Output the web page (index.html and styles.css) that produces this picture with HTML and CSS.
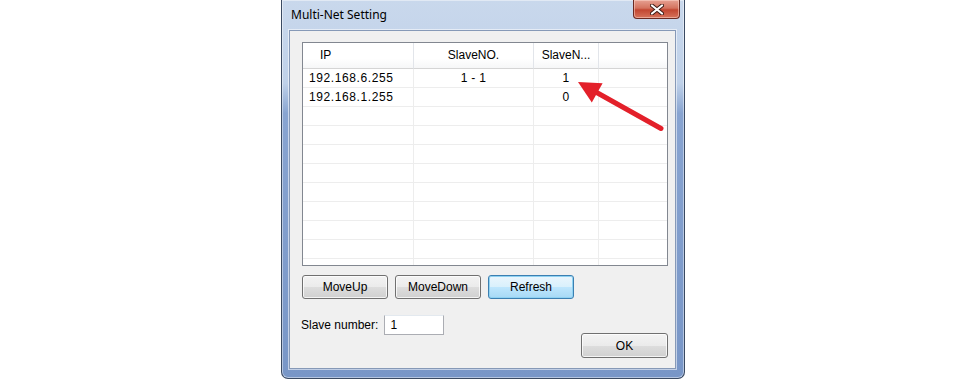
FILE: index.html
```html
<!DOCTYPE html>
<html lang="en">
  <head>
    <meta charset="UTF-8" />
    <title>Multi-Net Setting</title>
    <link rel="stylesheet" href="styles.css">
  </head>
  <body>
    <div class="window">
      <div class="titlebar">
        <span class="title">Multi-Net Setting</span>
        <button class="close" aria-label="Close">
          <svg width="14" height="11" viewBox="0 0 14 11">
            <path d="M2 1.5 L12 9.5 M12 1.5 L2 9.5" stroke="#3b1a14" stroke-width="4" stroke-linecap="round" />
            <path d="M2 1.5 L12 9.5 M12 1.5 L2 9.5" stroke="#fff" stroke-width="2.2" stroke-linecap="round" />
          </svg>
        </button>
      </div>

      <div class="client">
        <div class="listview">
          <div class="lv-row lv-header">
            <div class="cell ip">IP</div>
            <div class="cell center">SlaveNO.</div>
            <div class="cell center">SlaveN...</div>
            <div class="cell"></div>
          </div>
          <div class="lv-body">
            <div class="lv-row">
              <div class="cell ip">192.168.6.255</div>
              <div class="cell center">1 - 1</div>
              <div class="cell center">1</div>
              <div class="cell"></div>
            </div>
            <div class="lv-row">
              <div class="cell ip">192.168.1.255</div>
              <div class="cell center"></div>
              <div class="cell center">0</div>
              <div class="cell"></div>
            </div>
            <div class="lv-row"><div class="cell"></div><div class="cell"></div><div class="cell"></div><div class="cell"></div></div>
            <div class="lv-row"><div class="cell"></div><div class="cell"></div><div class="cell"></div><div class="cell"></div></div>
            <div class="lv-row"><div class="cell"></div><div class="cell"></div><div class="cell"></div><div class="cell"></div></div>
            <div class="lv-row"><div class="cell"></div><div class="cell"></div><div class="cell"></div><div class="cell"></div></div>
            <div class="lv-row"><div class="cell"></div><div class="cell"></div><div class="cell"></div><div class="cell"></div></div>
            <div class="lv-row"><div class="cell"></div><div class="cell"></div><div class="cell"></div><div class="cell"></div></div>
            <div class="lv-row"><div class="cell"></div><div class="cell"></div><div class="cell"></div><div class="cell"></div></div>
            <div class="lv-row"><div class="cell"></div><div class="cell"></div><div class="cell"></div><div class="cell"></div></div>
            <div class="lv-row"><div class="cell"></div><div class="cell"></div><div class="cell"></div><div class="cell"></div></div>
          </div>
        </div>

        <div class="buttons">
          <button class="btn">MoveUp</button>
          <button class="btn">MoveDown</button>
          <button class="btn default">Refresh</button>
        </div>

        <div class="bottom">
          <div class="slave">
            <label for="slave">Slave number:</label>
            <input id="slave" class="field" type="text" value="1">
          </div>
          <button class="btn ok">OK</button>
        </div>
      </div>
    </div>

    <svg class="arrow" width="100" height="62" viewBox="0 0 100 62">
      <line x1="24" y1="17" x2="91" y2="54.5" stroke="#e3202a" stroke-width="5" stroke-linecap="round" />
      <polygon points="8,8 32.6,9.2 21.8,28.4" fill="#e3202a" />
    </svg>
  </body>
</html>
```

FILE: styles.css
```css
* {
  box-sizing: border-box;
}
body {
  margin: 0;
  height: 379px;
  overflow: hidden;
  position: relative;
  background-color: #fff;
  font-family: "Liberation Sans", Arial, sans-serif;
  font-size: 12px;
  color: #000;
}
.window {
  margin-left: 281px;
  width: 404px;
  height: 379px;
  display: flex;
  flex-direction: column;
  padding: 0 8px 9px 7px;
  border: 1px solid #3a4a62;
  border-top: 0;
  border-radius: 0 0 7px 7px;
  background: linear-gradient(#c9d8ec 0, #bfd1e9 22%, #88a4d1 30%, #7896c7 100%);
  box-shadow: inset 0 0 0 1px rgba(255, 255, 255, 0.45);
}
.titlebar {
  height: 30px;
  flex-shrink: 0;
  display: flex;
  justify-content: space-between;
  align-items: flex-start;
}
.title {
  padding: 7px 0 0 2px;
  font-family: "Noto Sans", "Open Sans", sans-serif;
  font-size: 12px;
  line-height: 16px;
  color: #000;
}
.close {
  width: 47px;
  height: 19px;
  margin-right: -4px;
  padding: 0;
  display: flex;
  justify-content: center;
  align-items: center;
  border: 1px solid #6b2a22;
  border-top: 0;
  border-radius: 0 0 4px 4px;
  background: linear-gradient(#e6a192 0, #d4735f 45%, #c24631 55%, #d6735b 100%);
  box-shadow: inset 0 0 0 1px rgba(255, 220, 210, 0.5);
}
.client {
  flex: 1;
  padding: 11px 7px 0 12px;
  background-color: #f0f0f0;
  border: 1px solid #8699b7;
  box-shadow: 0 0 0 1px rgba(255, 255, 255, 0.55);
}
.listview {
  width: 366px;
  height: 224px;
  border: 1px solid #828790;
  background-color: #fff;
  overflow: hidden;
}
.lv-row {
  display: grid;
  grid-template-columns: 111px 120px 65px 1fr;
  height: 19px;
}
.cell {
  border-right: 1px solid #ededed;
  border-bottom: 1px solid #ededed;
  line-height: 18px;
  white-space: nowrap;
  overflow: hidden;
}
.cell:last-child {
  border-right: 0;
}
.ip {
  padding-left: 6px;
  letter-spacing: 0.6px;
}
.center {
  text-align: center;
  letter-spacing: 0.3px;
}
.lv-header {
  height: 26px;
  background: linear-gradient(#fff 0, #fff 60%, #f5f6f7 100%);
}
.lv-header .cell {
  line-height: 25px;
  border-right-color: #e2e5ea;
  border-bottom-color: #d5d5d5;
  letter-spacing: 0;
}
.lv-header .ip {
  padding-left: 17px;
}
.buttons {
  display: flex;
  gap: 7px;
  margin-top: 9px;
}
.btn {
  width: 86px;
  height: 24px;
  padding: 0;
  font-family: "Liberation Sans", Arial, sans-serif;
  font-size: 12px;
  color: #000;
  border: 1px solid #707070;
  border-radius: 3px;
  background: linear-gradient(#f3f3f3 0, #ebebeb 50%, #dddddd 51%, #d0d0d0 100%);
  box-shadow: inset 0 0 0 1px rgba(255, 255, 255, 0.75);
}
.btn.default {
  border-color: #3c7fb1;
  background: linear-gradient(#eaf6fd 0, #d9f0fc 50%, #bee6fd 51%, #a7d9f5 100%);
  box-shadow: inset 0 0 0 1px #8fd2f2;
}
.bottom {
  display: flex;
  justify-content: space-between;
  align-items: flex-start;
}
.slave {
  margin-top: 16px;
  display: flex;
  align-items: center;
  gap: 6px;
  margin-left: -1px;
}
.field {
  width: 60px;
  height: 20px;
  padding: 0 0 0 5px;
  border: 1px solid #abadb3;
  border-top-color: #e3e9ef;
  background-color: #fff;
  font-family: "Liberation Sans", Arial, sans-serif;
  font-size: 12px;
}
.ok {
  width: 87px;
  height: 25px;
  margin-top: 34px;
}
.arrow {
  position: absolute;
  left: 570px;
  top: 74px;
}
```
